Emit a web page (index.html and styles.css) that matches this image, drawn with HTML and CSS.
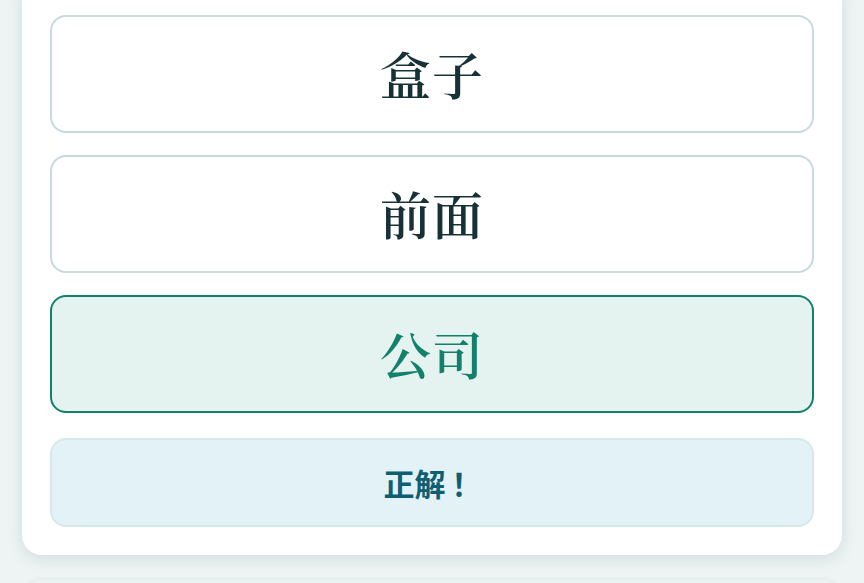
FILE: index.html
```html
<!DOCTYPE html>
<html lang="zh-CN">
<head>
<meta charset="utf-8">
<title>选择题</title>
<link rel="stylesheet" href="styles.css">
</head>
<body>
<main class="page">
  <section class="quiz-card">
    <div class="options">
      <button class="option">盒子</button>
      <button class="option">前面</button>
      <button class="option option--correct">公司</button>
    </div>
    <div class="feedback">正解<span class="feedback__mark">！</span></div>
  </section>
  <section class="next-card"></section>
</main>
</body>
</html>
```

FILE: styles.css
```css
*, *::before, *::after {
  box-sizing: border-box;
}

html, body {
  margin: 0;
  padding: 0;
  background: #eef4f4;
  height: 100%;
  overflow: hidden;
}

.page {
  padding: 0 22px;
  display: flex;
  flex-direction: column;
  gap: 25px;
}

.quiz-card {
  margin-top: -13px;
  background: #ffffff;
  border-radius: 0 0 20px 20px;
  padding: 28px;
  box-shadow: 0 4px 16px rgba(60, 100, 105, 0.16);
  display: flex;
  flex-direction: column;
  gap: 25px;
}

.options {
  display: flex;
  flex-direction: column;
  gap: 22px;
}

.option {
  height: 118px;
  border: 2px solid #c6dade;
  border-radius: 16px;
  background: #ffffff;
  color: #173236;
  font-family: "Noto Serif CJK SC", "Source Han Serif SC", serif;
  font-size: 51px;
  font-weight: 600;
  letter-spacing: 1px;
  padding: 0 0 2px;
  display: flex;
  align-items: center;
  justify-content: center;
}

.option--correct {
  border-color: #12806a;
  background: #e4f3ef;
  color: #12806a;
}

.feedback {
  height: 89px;
  border: 2px solid #d5e8ec;
  border-radius: 16px;
  background: #e3f2f6;
  color: #0f5f74;
  font-family: "Noto Sans CJK JP", "Noto Sans CJK SC", sans-serif;
  font-size: 31px;
  font-weight: 700;
  display: flex;
  align-items: center;
  justify-content: center;
  padding-left: 4px;
}

/* full-width exclamation sits centred in its own em cell */
.feedback__mark {
  margin: 0 10px 0 -2px;
}

.next-card {
  height: 60px;
  background: #edf3f3;
  border-radius: 20px 20px 0 0;
  box-shadow: 0 -1px 4px rgba(60, 100, 105, 0.08);
}
```
